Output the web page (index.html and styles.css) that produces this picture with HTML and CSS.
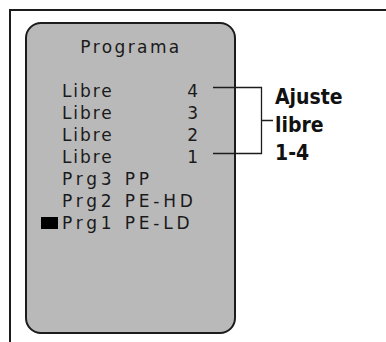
FILE: index.html
```html
<!DOCTYPE html>
<html lang="es">
<head>
<meta charset="utf-8">
<title>Programa</title>
<link rel="stylesheet" href="styles.css">
</head>
<body>
<div class="frame">
  <div class="panel">
    <div class="title">Programa</div>
    <div class="list">
      <div class="row"><span class="mark off"></span><span class="text free"><span class="name">Libre</span><span class="num">4</span></span></div>
      <div class="row"><span class="mark off"></span><span class="text free"><span class="name">Libre</span><span class="num">3</span></span></div>
      <div class="row"><span class="mark off"></span><span class="text free"><span class="name">Libre</span><span class="num">2</span></span></div>
      <div class="row"><span class="mark off"></span><span class="text free"><span class="name">Libre</span><span class="num">1</span></span></div>
      <div class="row"><span class="mark off"></span><span class="text prg"><span class="name">Prg3 PP</span></span></div>
      <div class="row"><span class="mark off"></span><span class="text prg"><span class="name">Prg2 PE-HD</span></span></div>
      <div class="row"><span class="mark"></span><span class="text prg"><span class="name">Prg1 PE-LD</span></span></div>
    </div>
  </div>
  <svg class="bracket" width="62" height="80" viewBox="0 0 62 80" aria-hidden="true">
    <path d="M0 7.5H48.5V73.5H0M48.5 40.5H60" fill="none" stroke="#1c1c1c" stroke-width="1.3"/>
  </svg>
  <div class="label">Ajuste<br>libre<br>1-4</div>
</div>
</body>
</html>
```
FILE: styles.css
```css
html, body {
  margin: 0;
  padding: 0;
  background: #ffffff;
  overflow: hidden;
}

.frame {
  position: relative;
  margin: 9px 0 0 9px;
  height: 360px;
  border-top: 2px solid #1c1c1c;
  border-left: 2px solid #1c1c1c;
  padding: 11px 0 0 14px;
  box-sizing: border-box;
}

.panel {
  box-sizing: border-box;
  width: 211px;
  height: 312px;
  background: #b9b9b9;
  border: 2px solid #1c1c1c;
  border-radius: 16px;
  padding-top: 12px;
  font-family: "DejaVu Sans", Verdana, sans-serif;
  font-size: 17px;
  color: #1a1a1a;
}

.title {
  line-height: 22px;
  text-align: center;
  letter-spacing: 2.4px;
  padding-left: 1px;
}

.list {
  margin-top: 22px;
}

.row {
  display: flex;
  height: 22px;
  line-height: 22px;
  padding-left: 14px;
}

.mark {
  flex: none;
  align-self: flex-end;
  width: 17px;
  height: 12px;
  margin: 0 4px 5px 0;
  background: #000;
}

.mark.off {
  visibility: hidden;
}

.text {
  display: flex;
  justify-content: space-between;
  width: 136px;
}

.free .name {
  letter-spacing: 1.9px;
}

.prg .name {
  letter-spacing: 3.8px;
}

.bracket {
  position: absolute;
  left: 202px;
  top: 69px;
}

.label {
  position: absolute;
  left: 264px;
  top: 72px;
  font-family: "DejaVu Sans", sans-serif;
  font-stretch: condensed;
  font-weight: bold;
  font-size: 21px;
  line-height: 28px;
  color: #111;
}
```
